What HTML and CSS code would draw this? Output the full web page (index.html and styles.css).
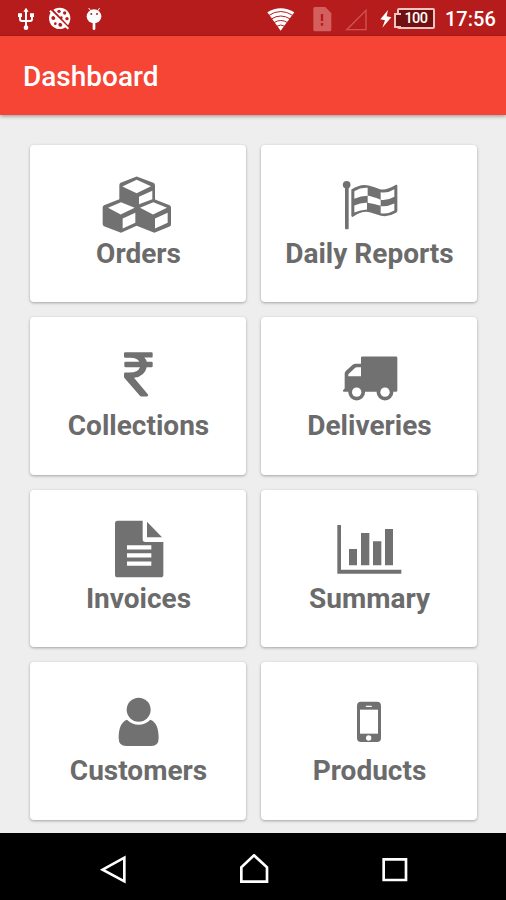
FILE: index.html
```html
<!DOCTYPE html>
<html lang="en">
<head>
  <meta charset="UTF-8">
  <title>Dashboard</title>
  <link rel="stylesheet" href="styles.css">
</head>
<body>

<div class="status-bar">
  <svg class="usb" width="18" height="36" viewBox="51 0 54 108">
    <path d="M78 30v52M60 45v12q0 6 6 6h24q6 0 6-6V45" fill="none" stroke="#fff" stroke-width="6"/>
    <path d="M78 23l8 12H70zM54 40h12v11H54zM90 40h12v11H90z" fill="#fff"/>
    <circle cx="78" cy="83" r="7" fill="#fff"/>
  </svg>
  <svg class="globe" width="24" height="36" viewBox="144 0 72 108">
    <circle cx="179" cy="55" r="32" fill="#fff"/>
    <g fill="#b71c1c">
      <circle cx="177" cy="34" r="5"/><circle cx="194" cy="39" r="5"/>
      <circle cx="160" cy="54" r="6"/><circle cx="184" cy="53" r="4"/>
      <circle cx="201" cy="56" r="5"/><circle cx="166" cy="71" r="4"/><circle cx="181" cy="74" r="6"/>
    </g>
    <path d="M154 29l52 55" stroke="#b71c1c" stroke-width="9"/>
    <path d="M150 32l55 54" stroke="#fff" stroke-width="6"/>
  </svg>
  <svg class="droid" width="18" height="36" viewBox="253 0 54 108">
    <path d="M264 24l8 11M297 24l-8 11" stroke="#fff" stroke-width="3"/>
    <ellipse cx="280" cy="49" rx="22" ry="21" fill="#fff"/>
    <path d="M280 68v18" stroke="#fff" stroke-width="8" stroke-linecap="round"/>
    <circle cx="272" cy="42" r="3" fill="#b71c1c"/><circle cx="289" cy="42" r="3" fill="#b71c1c"/>
  </svg>
  <svg class="wifi" width="28" height="36" viewBox="42 0 84 108">
    <path d="M43 37Q83 12 124 37L83 92z" fill="#fff"/>
    <path d="M48 46Q83 23 119 46M55 57Q83 39 112 57M63 68Q83 55 104 68M71 79Q83 71 96 79" fill="none" stroke="#b71c1c" stroke-width="3"/>
  </svg>
  <svg class="sim" width="20" height="36" viewBox="180 0 60 108">
    <path d="M189 21h31l18 19v49q0 5-5 5h-44q-5 0-5-5V26q0-5 5-5z" fill="#d35f5f"/>
    <path d="M210 42v21M210 69v8" stroke="#b71c1c" stroke-width="7"/>
  </svg>
  <svg class="signal" width="22" height="36" viewBox="278 0 66 108">
    <path d="M283 89l58-58v58z" fill="none" stroke="#cf5552" stroke-width="4"/>
  </svg>
  <svg class="bolt" width="12" height="36" viewBox="380 0 36 108">
    <path d="M404 30l-23 28 14 3-8 22 27-31-14-3z" fill="#fff"/>
  </svg>
  <div class="battery"><span>100</span></div>
  <span class="clock">17:56</span>
</div>

<div class="app-bar">Dashboard</div>

<div class="grid">
  <div class="card">
    <svg class="icon" viewBox="246 118.5 216 180">
      <path d="M350 123l50 19q5 2 5 7v43l44 17q4 2 4 7v50q0 5-4 7l-46 19-53-21-47 21-51-20q-4-2-4-7v-49q0-5 4-7l46-18v-42q0-5 4-7z"/>
      <g fill="#fff">
        <path d="M350 133l43 19-43 21-43-20zM357 184l40-18v25l-40 15z"/>
        <path d="M303 200l41 17-42 20-38-20zM308 249l38-17v30l-38 17z"/>
        <path d="M400 200l41 17-42 20-39-20zM405 249l38-17v30l-38 17z"/>
      </g>
    </svg>
    <span>Orders</span>
  </div>
  <div class="card">
    <svg class="icon" viewBox="234 118.5 216 180">
      <circle cx="275" cy="148" r="11.5"/>
      <path d="M270 150h11v128q0 3-3 3h-5q-3 0-3-3z"/>
      <path d="M289 162q28-18 52-12 18 5 34 11 18 5 48-13 4-1 4 3v75q0 4-4 6-21 13-45 9l-34-11q-23-5-50 14-5 1-5-4z"/>
      <g fill="#fff">
        <path d="M298 167q20-12 40-10v24q-20 0-40 9zM338 181q12 1 39 12v18q-20-6-39-9z"/>
        <path d="M377 170q20 4 41-9v23q-20 12-41 9zM298 210q20-9 38-8v20q-20 1-38 9zM377 212q20 2 41-8v21q-20 12-41 8z"/>
      </g>
    </svg>
    <span>Daily Reports</span>
  </div>
  <div class="card">
    <svg class="icon" viewBox="246 112.5 216 180">
      <path d="M316 128h79q3 0 3 3v10q0 3-3 3h-22q6 6 7 13h15q3 0 3 3v10q0 3-3 3h-15q-5 27-38 32l42 50q2 5-3 6h-16q-4 0-6-3l-45-52q-2-2-2-5v-8q0-4 4-4h12q26 0 32-16h-43q-4 0-4-3v-10q0-3 4-3h41q-6-12-28-12h-14q-4 0-4-4v-10q0-3 4-3z"/>
    </svg>
    <span>Collections</span>
  </div>
  <div class="card">
    <svg class="icon" viewBox="234 112.5 216 180">
      <path d="M322 141h101q4 0 4 4v98q0 4-4 4h-9a24 26 0 0 1-47 0h-38a24 26 0 0 1-46 0h-16q-4 0-3-5l5-5v-44q0-5 4-9l20-18q4-3 9-3h16v-18q0-4 4-4z"/>
      <circle cx="305" cy="248" r="25"/><circle cx="390" cy="248" r="25"/>
      <g fill="#fff">
        <path d="M318 173v27h-38v-6l19-18q3-3 7-3z"/>
        <circle cx="305" cy="248" r="14"/><circle cx="390" cy="248" r="14"/>
      </g>
    </svg>
    <span>Deliveries</span>
  </div>
  <div class="card">
    <svg class="icon" viewBox="246 105 216 180">
      <path d="M293 107h75v56q0 8 8 8h54v98q0 8-8 8H293q-8 0-8-8V115q0-8 8-8z"/>
      <path d="M381 110l45 47h-45z"/>
      <path d="M321 187h73M321 211h73M321 236h73" stroke="#fff" stroke-width="13"/>
    </svg>
    <span>Invoices</span>
  </div>
  <div class="card">
    <svg class="icon" viewBox="234 105 216 180">
      <path d="M247 120h11v134h181v12H247zM282 192h24v49h-24zM318 144h25v97h-25zM354 169h25v72h-25zM390 132h24v109h-24z"/>
    </svg>
    <span>Summary</span>
  </div>
  <div class="card">
    <svg class="icon" viewBox="246 111 216 180">
      <path d="M321 194c20 20 50 20 70 0 19 7 25 29 25 55q0 24-22 24h-75q-23 0-23-24c0-26 6-48 25-55z"/>
      <circle cx="356" cy="164" r="36"/>
    </svg>
    <span>Customers</span>
  </div>
  <div class="card">
    <svg class="icon" viewBox="234 111 216 180">
      <rect x="306" y="140" width="72" height="121" rx="12"/>
      <g fill="#fff">
        <path d="M315 164h54v72h-54z"/>
        <circle cx="341" cy="249" r="8"/>
        <rect x="332" y="152" width="19" height="4" rx="2"/>
      </g>
    </svg>
    <span>Products</span>
  </div>
</div>

<div class="nav-bar">
  <svg width="30" height="32" viewBox="57 132 90 96"><path d="M68 179l65-36v71z"/></svg>
  <svg width="30" height="32" viewBox="477 132 90 96"><path d="M522 136l39 36v43h-77v-43z"/></svg>
  <svg width="30" height="32" viewBox="899 132 90 96"><path d="M910 148h67v62h-67z"/></svg>
</div>

</body>
</html>
```
FILE: styles.css
```css
* { box-sizing: border-box; }
body {
  margin: 0;
  height: 900px;
  display: flex;
  flex-direction: column;
  overflow: hidden;
  background: #eeeeee;
  font-family: Roboto, sans-serif;
}
svg { display: block; flex: none; }

.status-bar {
  display: flex;
  align-items: center;
  height: 36px;
  padding-left: 17px;
  background: #b71c1c;
  color: #fff;
}
.globe { margin-left: 13px; }
.droid { margin-left: 13px; }
.wifi { margin-left: 164px; }
.sim { margin-left: 17px; }
.signal { margin-left: 13px; }
.bolt { margin-left: 13px; }
.battery {
  display: flex;
  align-items: center;
  justify-content: center;
  position: relative;
  width: 38px;
  height: 21px;
  margin-left: 5px;
  padding-top: 1px;
  border: 2px solid #f0c4c0;
  border-radius: 2px;
  background: #701010;
  font-size: 14.5px;
  font-weight: 500;
  letter-spacing: -0.5px;
}
/* battery terminal */
.battery::before {
  content: "";
  position: absolute;
  left: -5px;
  top: 3px;
  width: 5px;
  height: 11px;
  border: 2px solid #f0c4c0;
  border-right: none;
  background: #701010;
}
.clock { margin-left: 10px; padding-top: 2px; font-size: 20px; font-weight: 500; }

.app-bar {
  display: flex;
  align-items: center;
  height: 79px;
  padding: 2px 0 0 23px;
  background: #f64435;
  box-shadow: 0 1px 4px rgba(0, 0, 0, 0.4);
  color: #fff;
  font-size: 28px;
  font-weight: 500;
}

.grid {
  display: grid;
  grid-template-columns: 216px 216px;
  grid-auto-rows: 157.6px;
  gap: 15px;
  padding: 29.5px 30px 0;
  height: 718px;
}
.card {
  display: flex;
  flex-direction: column;
  align-items: center;
  padding-top: 30px;
  border-radius: 4px;
  background: #fff;
  box-shadow: 0 1px 3px rgba(0, 0, 0, 0.32);
  color: #6b6b6b;
  font-size: 28px;
  font-weight: 700;
  line-height: 33px;
}
.card span { padding-left: 1px; }
.icon { width: 72px; height: 60px; margin-bottom: 2px; fill: #717171; }

.nav-bar {
  display: flex;
  align-items: center;
  justify-content: center;
  gap: 110.5px;
  height: 67px;
  padding: 6px 0 0 2px;
  background: #000;
}
.nav-bar svg { fill: none; stroke: #fff; stroke-width: 8; }
```
